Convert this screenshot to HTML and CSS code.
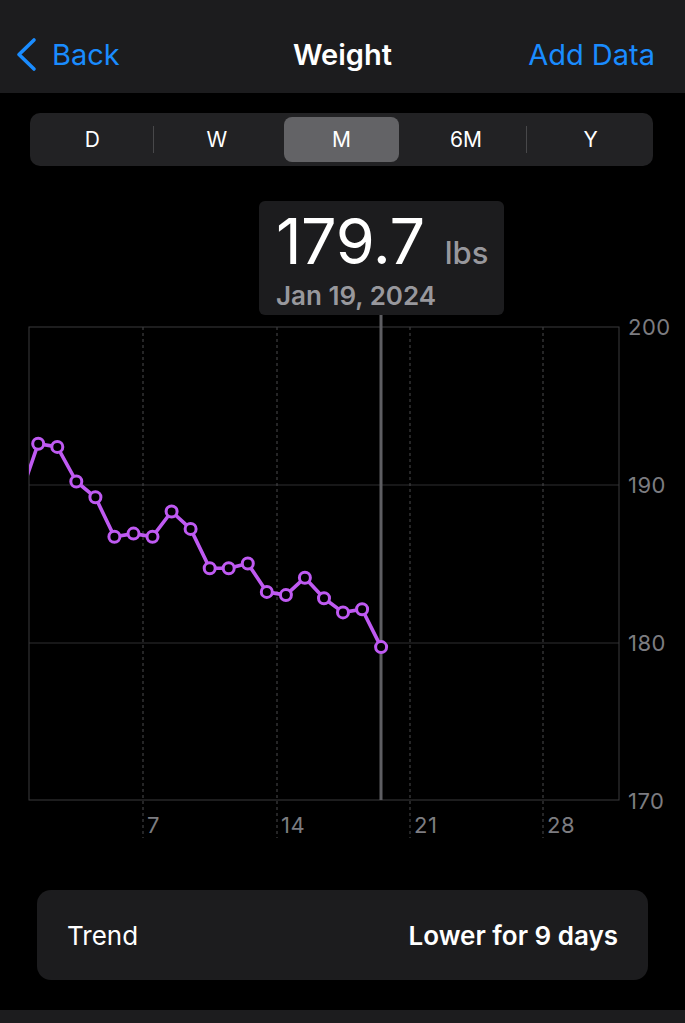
FILE: index.html
```html
<!DOCTYPE html>
<html>

<head>
    <title>Weight</title>
    <meta name="viewport" content="width=device-width, initial-scale=1">
    <link rel="stylesheet" href="styles.css">
</head>

<body>
    <div class="navbar">
        <a class="nav-back" href="#">
            <svg class="chevron" width="22" height="36" viewBox="0 0 22 36">
                <path d="M19 3 L4 17.5 L19 32" fill="none" stroke="#1a8cff" stroke-width="3.6" stroke-linecap="round" stroke-linejoin="round" />
            </svg>
            <span>Back</span>
        </a>
        <div class="nav-title">Weight</div>
        <a class="nav-action" href="#">Add Data</a>
    </div>

    <div class="segments">
        <div class="seg">D</div>
        <div class="seg divided">W</div>
        <div class="seg active">M</div>
        <div class="seg">6M</div>
        <div class="seg divided">Y</div>
    </div>

    <div class="callout">
        <div class="callout-value">179.7 <span class="unit">lbs</span></div>
        <div class="callout-date">Jan 19, 2024</div>
    </div>

    <svg class="chart" width="685" height="535" viewBox="0 315 685 535">
        <defs>
            <clipPath id="plotClip">
                <rect x="29" y="320" width="590" height="480" />
            </clipPath>
        </defs>

        <!-- grid -->
        <line class="grid" x1="29" y1="485" x2="619" y2="485" />
        <line class="grid" x1="29" y1="643" x2="619" y2="643" />
        <line class="dash" x1="143" y1="327" x2="143" y2="838" />
        <line class="dash" x1="277" y1="327" x2="277" y2="838" />
        <line class="dash" x1="410" y1="327" x2="410" y2="838" />
        <line class="dash" x1="543" y1="327" x2="543" y2="838" />
        <rect class="frame" x="29" y="327" width="590" height="473" />

        <!-- selection -->
        <line class="cursor" x1="381" y1="315" x2="381" y2="800" />

        <g id="series" clip-path="url(#plotClip)"></g>

        <text class="axis" x="628" y="335">200</text>
        <text class="axis" x="628" y="493">190</text>
        <text class="axis" x="628" y="651">180</text>
        <text class="axis" x="628" y="809">170</text>

        <text class="axis" x="147" y="833">7</text>
        <text class="axis" x="281" y="833">14</text>
        <text class="axis" x="414" y="833">21</text>
        <text class="axis" x="547" y="833">28</text>
    </svg>

    <div class="trend">
        <span>Trend</span>
        <span class="trend-value">Lower for 9 days</span>
    </div>

    <div class="tabbar"></div>

    <script>
        // weights for Dec 31 - Jan 19
        var weights = [189.1, 192.6, 192.4, 190.2, 189.2, 186.7, 186.9, 186.7, 188.3, 187.2,
            184.7, 184.7, 185.0, 183.2, 183.0, 184.1, 182.8, 181.9, 182.1, 179.7];
        var dayW = 19.05;
        var left = 28.7;
        var series = document.getElementById('series');

        function px(day) {
            return left + (day - 0.5) * dayW;
        }

        function py(value) {
            return 327 + (200 - value) * 15.77;
        }

        var pts = weights.map((w, i) => px(i).toFixed(1) + ',' + py(w).toFixed(1));

        var html = `<polyline class="line" points="${pts.join(' ')}" />`;
        weights.forEach((w, i) => {
            if (i > 0) html += `<circle class="dot" cx="${px(i).toFixed(1)}" cy="${py(w).toFixed(1)}" r="5.5" />`;
        });
        series.innerHTML = html;
    </script>
</body>

</html>
```
FILE: styles.css
```css
body {
    margin: 0;
    background: #000;
    color: #fff;
    font-family: Inter, "Liberation Sans", sans-serif;
    width: 685px;
    height: 1023px;
    overflow: hidden;
}

a {
    text-decoration: none;
}

.navbar {
    height: 77px;
    padding-top: 16px;
    background: #1c1c1e;
    display: grid;
    grid-template-columns: 1fr auto 1fr;
    align-items: center;
    font-size: 29px;
}

.nav-back {
    display: flex;
    align-items: center;
    gap: 15px;
    padding-left: 15px;
    color: #1a8cff;
}

.chevron {
    display: block;
}

.nav-title {
    font-weight: 600;
}

.nav-action {
    justify-self: end;
    padding-right: 30px;
    color: #1a8cff;
}

.segments {
    margin: 20px 32px 0 30px;
    height: 53px;
    background: #222224;
    border-radius: 10px;
    display: grid;
    grid-template-columns: repeat(5, 1fr);
}

.seg {
    position: relative;
    display: flex;
    align-items: center;
    justify-content: center;
    margin: 4px 5px;
    border-radius: 8px;
    font-size: 21px;
    font-weight: 400;
}

.seg.active {
    background: #636366;
}

.seg.divided::before {
    content: "";
    position: absolute;
    left: -7px;
    top: 9px;
    bottom: 9px;
    width: 1px;
    background: #48484a;
}

.callout {
    margin: 35px 0 0 259px;
    width: 245px;
    height: 114px;
    box-sizing: border-box;
    padding: 4px 0 0 17px;
    background: #1c1c1e;
    border-radius: 6px;
}

.callout-value {
    font-size: 63px;
    font-weight: 400;
    line-height: 72px;
    letter-spacing: -0.5px;
}

.unit {
    font-size: 31px;
    font-weight: 500;
    color: #98989d;
    letter-spacing: 0;
    margin-left: 3px;
}

.callout-date {
    margin-top: -6px;
    font-size: 26px;
    font-weight: 600;
    color: #98989d;
    line-height: 26px;
}

.chart {
    display: block;
}

.grid {
    stroke: #2e2e30;
    stroke-width: 1;
}

.dash {
    stroke: #4a4a4d;
    stroke-width: 1;
    stroke-dasharray: 3 3;
}

.frame {
    fill: none;
    stroke: #3a3a3c;
    stroke-width: 1;
}

.cursor {
    stroke: #5e5e62;
    stroke-width: 3;
}

.line {
    fill: none;
    stroke: #bf5af2;
    stroke-width: 3.6;
    stroke-linejoin: round;
}

.dot {
    fill: #000;
    stroke: #bf5af2;
    stroke-width: 3;
}

.axis {
    fill: #7c7c80;
    font-family: Inter, "Liberation Sans", sans-serif;
    font-size: 22px;
    letter-spacing: 0.5px;
}

.trend {
    margin: 40px 37px 0 37px;
    height: 90px;
    box-sizing: border-box;
    padding: 0 30px;
    background: #1c1c1e;
    border-radius: 14px;
    display: flex;
    align-items: center;
    justify-content: space-between;
    font-size: 26px;
}

.trend-value {
    font-weight: 600;
}

.tabbar {
    margin-top: 30px;
    height: 13px;
    background: #1c1c1e;
}
```
